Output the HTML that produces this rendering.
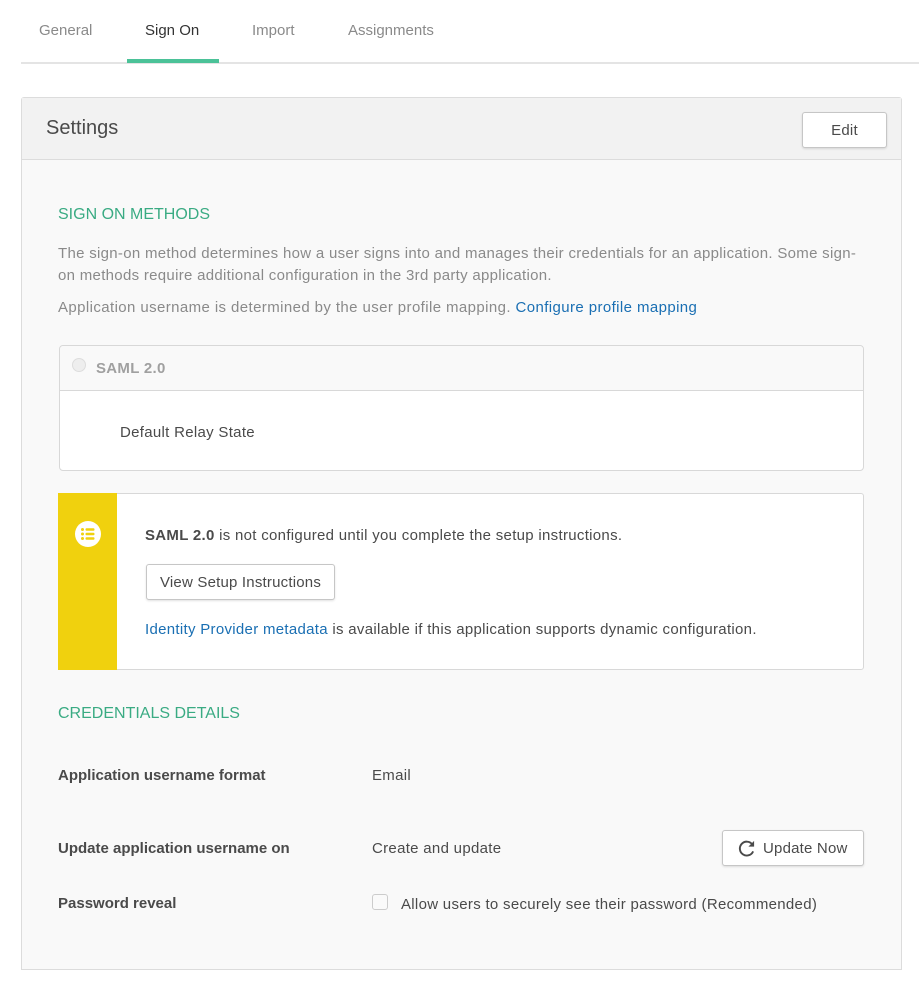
<!DOCTYPE html>
<html><head><style>
*{box-sizing:border-box;margin:0;padding:0}
body{width:919px;height:999px;background:#fff;font-family:"Liberation Sans",sans-serif;color:#4a4a4a;position:relative;overflow:hidden;font-size:15px}
.a{position:absolute;white-space:nowrap}
.t{letter-spacing:0.3px}
.tab{top:22px;font-size:15px;color:#8a8a8a}
.btn{position:absolute;background:#fff;border:1px solid #c6c6c6;border-radius:3px;box-shadow:0 1px 2px rgba(0,0,0,.12);font-size:15px;color:#4a4a4a;display:flex;align-items:center;justify-content:center;letter-spacing:0.2px}
.g{color:#3aab83;font-size:16px}
.lnk{color:#1a6fb3}
.lab{font-weight:bold;color:#4a4a4a}
</style></head><body>
<div class="a tab" style="left:39px">General</div>
<div class="a tab" style="left:145px;color:#333">Sign On</div>
<div class="a tab" style="left:252px">Import</div>
<div class="a tab" style="left:348px">Assignments</div>
<div class="a" style="left:21px;top:62px;width:898px;height:2px;background:#e4e4e4"></div>
<div class="a" style="left:127px;top:59px;width:92px;height:4px;background:#4bc298"></div>

<div class="a" style="left:21px;top:97px;width:881px;height:873px;background:#f9f9f9;border:1px solid #dcdcdc;border-radius:3px 3px 0 0"></div>
<div class="a" style="left:22px;top:98px;width:879px;height:62px;background:#f2f2f2;border-bottom:1px solid #dcdcdc"></div>
<div class="a" style="left:46px;top:117px;font-size:20px;color:#4a4a4a">Settings</div>
<div class="btn" style="left:802px;top:112px;width:85px;height:36px">Edit</div>

<div class="a g" style="left:58px;top:206px">SIGN ON METHODS</div>
<div class="a" style="left:58px;top:243px;color:#8a8a8a;line-height:22px;white-space:normal;width:805px;letter-spacing:0.3px">The sign-on method determines how a user signs into and manages their credentials for an application. Some sign-on methods require additional configuration in the 3rd party application.</div>
<div class="a" style="left:58px;top:299px;color:#8a8a8a;letter-spacing:0.4px">Application username is determined by the user profile mapping. <span class="lnk">Configure profile mapping</span></div>

<div class="a" style="left:59px;top:345px;width:805px;height:126px;background:#fff;border:1px solid #d8d8d8;border-radius:4px"></div>
<div class="a" style="left:60px;top:346px;width:803px;height:45px;background:#f9f9f9;border-bottom:1px solid #d8d8d8;border-radius:4px 4px 0 0"></div>
<div class="a" style="left:72px;top:358px;width:14px;height:14px;border-radius:50%;background:#eee;border:1px solid #ddd"></div>
<div class="a t" style="left:96px;top:360px;font-weight:bold;color:#a0a0a0">SAML 2.0</div>
<div class="a t" style="left:120px;top:424px">Default Relay State</div>

<div class="a" style="left:58px;top:493px;width:806px;height:177px;background:#fff;border:1px solid #d8d8d8;border-radius:3px"></div>
<div class="a" style="left:58px;top:493px;width:59px;height:177px;background:#f0d10e"></div>
<svg class="a" style="left:75px;top:521px" width="26" height="26" viewBox="0 0 26 26"><circle cx="13" cy="13" r="13" fill="#fff"/><g fill="#f0d10e"><circle cx="7.5" cy="8.5" r="1.5"/><circle cx="7.5" cy="13" r="1.5"/><circle cx="7.5" cy="17.5" r="1.5"/><rect x="10.5" y="7.3" width="9" height="2.4" rx="1"/><rect x="10.5" y="11.8" width="9" height="2.4" rx="1"/><rect x="10.5" y="16.3" width="9" height="2.4" rx="1"/></g></svg>
<div class="a t" style="left:145px;top:527px"><b>SAML 2.0</b> is not configured until you complete the setup instructions.</div>
<div class="btn" style="left:146px;top:564px;width:189px;height:36px">View Setup Instructions</div>
<div class="a t" style="left:145px;top:621px"><span class="lnk">Identity Provider metadata</span> is available if this application supports dynamic configuration.</div>

<div class="a g" style="left:58px;top:705px">CREDENTIALS DETAILS</div>
<div class="a lab" style="left:58px;top:767px">Application username format</div>
<div class="a t" style="left:372px;top:767px">Email</div>
<div class="a lab" style="left:58px;top:840px">Update application username on</div>
<div class="a t" style="left:372px;top:840px">Create and update</div>
<div class="btn" style="left:722px;top:830px;width:142px;height:36px;justify-content:flex-start;padding-left:14px"><svg width="19" height="19" viewBox="0 0 20 20" style="margin-right:7px"><path d="M16 5.5A7.3 7.3 0 1 0 17 13" fill="none" stroke="#4a4a4a" stroke-width="2"/><path d="M18 2v6h-6z" fill="#4a4a4a"/></svg>Update Now</div>
<div class="a lab" style="left:58px;top:895px">Password reveal</div>
<div class="a" style="left:372px;top:894px;width:16px;height:16px;border:1px solid #ccc;border-radius:3px;background:#fafafa"></div>
<div class="a t" style="left:401px;top:896px">Allow users to securely see their password (Recommended)</div>
</body></html>
